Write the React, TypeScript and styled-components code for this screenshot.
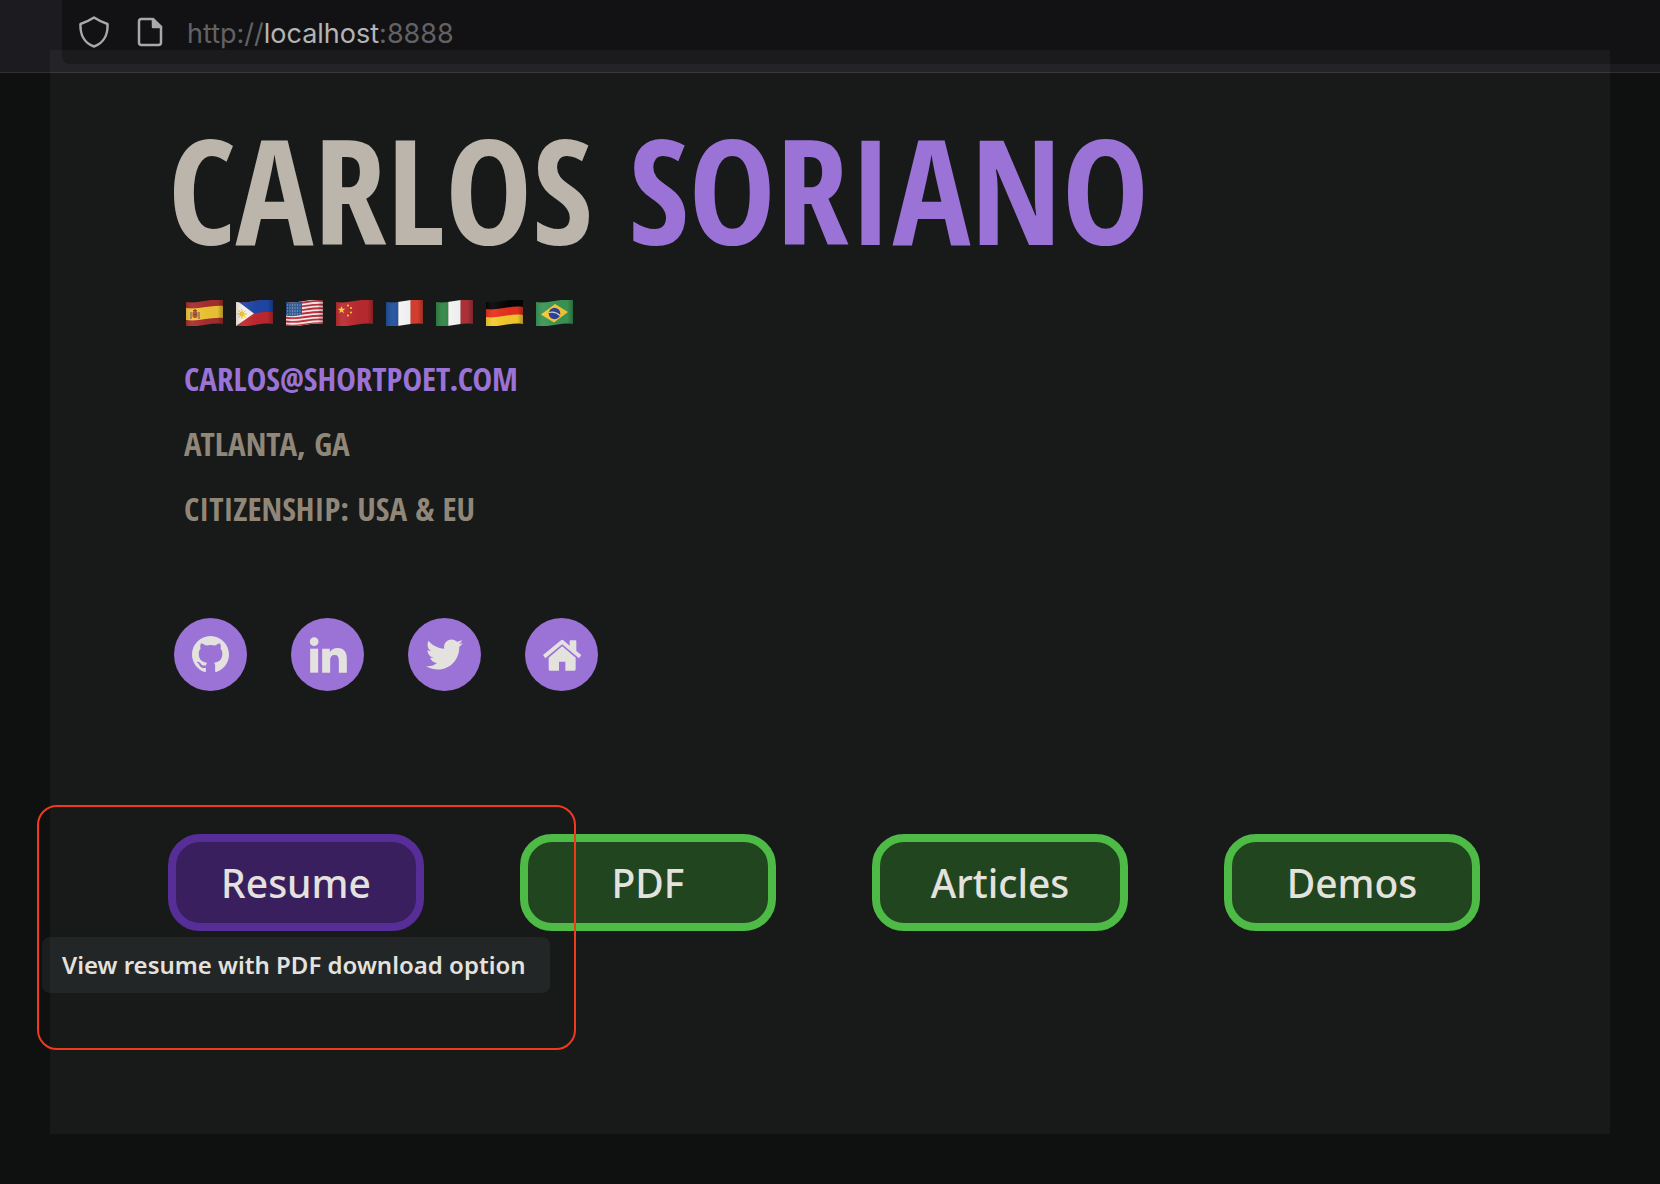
import React, { useId } from "react";
import styled, { createGlobalStyle } from "styled-components";
import { FaTwitter } from "react-icons/fa";

const color = {
  page: "#0e1110",
  toolbar: "#1c1b20",
  field: "#121214",
  veil: "rgba(255, 255, 255, 0.04)",
  sand: "#bbb5ac",
  stone: "#918779",
  violet: "#9b72d6",
  light: "#e4e2de",
  highlight: "#f03a1c",
};

const condensed = `"Noto Sans ExtraCondensed", "Open Sans Condensed", "Roboto Condensed", "Liberation Sans Narrow", sans-serif`;

const GlobalStyle = createGlobalStyle`
  * { box-sizing: border-box; }
  body {
    margin: 0;
    background: ${color.page};
    color: ${color.light};
    font-family: "Noto Sans", "Open Sans", sans-serif;
  }
`;

const Toolbar = styled.header`
  height: 73px;
  padding: 0 0 8px 62px;
  background: ${color.toolbar};
  border-bottom: 1px solid #302f33;
`;

const AddressBar = styled.div`
  display: flex;
  align-items: center;
  gap: 22px;
  height: 64px;
  padding-left: 17px;
  background: ${color.field};
  border-bottom-left-radius: 8px;
  color: #a9a9ab;
`;

const ToolIcon = styled.svg`
  flex: none;
  width: 32px;
  height: 32px;
`;

const Address = styled.div`
  padding-top: 3px;
  color: #626264;
  font: 400 27px/36px Inter, sans-serif;
`;

const Host = styled.span`
  color: #b4b4b6;
`;

const Panel = styled.main`
  position: relative;
  margin: -23px 50px 50px;
  padding: 59px 130px 203px 118px;
  background: ${color.veil};
`;

const Name = styled.h1`
  margin: 0 0 31px 0;
  color: ${color.sand};
  font: 700 146px/160px ${condensed};
  white-space: nowrap;
`;

const Surname = styled.span`
  color: ${color.violet};
`;

const Flags = styled.div`
  display: flex;
  gap: 13px;
  margin: 0 0 20px 18px;
`;

const FlagDrawing = styled.svg`
  display: block;
  width: 37px;
  height: 26px;
`;

const Contact = styled.div`
  display: flex;
  flex-direction: column;
  align-items: flex-start;
  margin: 0 0 77px 16px;
  color: ${color.stone};
  font: 500 33px/65px ${condensed};
`;

const Email = styled.a`
  color: ${color.violet};
  text-decoration: none;
`;

const Socials = styled.nav`
  display: flex;
  gap: 44px;
  margin: 0 0 143px 6px;
`;

const SocialLink = styled.a`
  display: grid;
  place-items: center;
  width: 73px;
  height: 73px;
  border-radius: 50%;
  background: ${color.violet};
  color: ${color.light};
`;

const Actions = styled.nav`
  position: relative;
  display: grid;
  grid-template-columns: repeat(4, 1fr);
  gap: 96px;
`;

const ActionButton = styled.button<{ $active?: boolean }>`
  height: 97px;
  padding: 0;
  border: 8px solid ${(p) => (p.$active ? "#572d98" : "#4fbb47")};
  border-radius: 32px;
  background: ${(p) => (p.$active ? "#391f5e" : "#20451f")};
  color: ${color.light};
  font: 500 39px/56px "Noto Sans", "Open Sans", sans-serif;
`;

const Tooltip = styled.div`
  position: absolute;
  top: 103px;
  left: -126px;
  padding: 10px 24px 10px 20px;
  border-radius: 8px;
  background: rgba(240, 235, 255, 0.06);
  font-weight: 600;
  font-size: 24px;
  line-height: 36px;
  white-space: nowrap;
`;

const Highlight = styled.div`
  position: absolute;
  top: -29px;
  left: -131px;
  width: 539px;
  height: 245px;
  border: 2px solid ${color.highlight};
  border-radius: 20px;
  pointer-events: none;
`;

/* A horizontal stripe that follows the wave of the cloth. */
const stripe = (top: number, bottom: number) =>
  `M0 ${top + 2}C12 ${top + 4} 24 ${top - 2} 37 ${top}V${bottom - 2}C24 ${bottom - 4} 12 ${bottom + 2} 0 ${bottom}Z`;

const Band = ({ from, to, fill }: { from: number; to: number; fill: string }) => (
  <path d={stripe(from, to)} fill={fill} />
);

function Flag({ label, children }: { label: string; children: React.ReactNode }) {
  const id = "flag" + useId().replace(/\W/g, "");
  return (
    <FlagDrawing viewBox="0 0 37 26" role="img" aria-label={label}>
      <defs>
        <clipPath id={`${id}c`}>
          <path d={stripe(0, 26)} />
        </clipPath>
        <linearGradient id={`${id}g`}>
          <stop offset="0" stopColor="#000" stopOpacity="0.12" />
          <stop offset="0.2" stopColor="#fff" stopOpacity="0.06" />
          <stop offset="0.6" stopColor="#000" stopOpacity="0.04" />
          <stop offset="0.85" stopColor="#000" stopOpacity="0.04" />
          <stop offset="1" stopColor="#000" stopOpacity="0.3" />
        </linearGradient>
      </defs>
      <g clipPath={`url(#${id}c)`}>
        {children}
        <rect width="37" height="26" fill={`url(#${id}g)`} />
      </g>
    </FlagDrawing>
  );
}

const Tricolour = ({ fills }: { fills: string[] }) => (
  <>
    {fills.map((fill, i) => (
      <rect key={fill} x={i * 12.3} width="12.5" height="26" fill={fill} />
    ))}
  </>
);

const STAR = "M0-4L1-1.2 3.8-1.2 1.5.5 2.4 3.3 0 1.6-2.4 3.3-1.5.5-3.8-1.2-1-1.2Z";

const flags = [
  {
    label: "Spain",
    art: (
      <>
        <rect width="37" height="26" fill="#a82e2e" />
        <path d="M0 8C12 10 24 5 37 6V18C24 17 12 22 0 20Z" fill="#f0c636" />
        <rect x="6.5" y="11" width="5" height="7" rx="2" fill="#b8433a" />
        <path d="M5 12v7M13 12v7" stroke="#8a6a55" strokeWidth="1.4" />
        <path d="M7 10.5h4M9 9v2M7 14.5h4" stroke="#7a4a20" strokeWidth="1.2" />
      </>
    ),
  },
  {
    label: "Philippines",
    art: (
      <>
        <rect width="37" height="26" fill="#c1282f" />
        <path d="M0 0H37V12C24 11 12 16 0 14Z" fill="#1f47a8" />
        <path d="M0 0L18 13.5 0 26Z" fill="#f4f1e8" />
        <circle cx="6" cy="14" r="2.6" fill="#efbd2e" />
        <path d="M6 9v10M1 14h10M2.5 10.5l7 7M9.5 10.5l-7 7" stroke="#efbd2e" strokeWidth="1" />
      </>
    ),
  },
  {
    label: "United States",
    art: (
      <>
        <rect width="37" height="26" fill="#f3f1f1" />
        {[0, 1, 2, 3, 4, 5, 6].map((i) => (
          <path
            key={i}
            d={`M0 ${i * 3.7 + 3}c12 2 24-3 37-2`}
            fill="none"
            stroke="#c4303a"
            strokeWidth="1.9"
          />
        ))}
        <path d="M0 0H16V14.5C10 16.5 5 16.5 0 15.5Z" fill="#2d5590" />
        {[5, 8, 11, 14].map((y) => (
          <path key={y} d={`M1 ${y}h15`} stroke="#a9bcd8" strokeWidth="1" strokeDasharray="1 1.5" />
        ))}
      </>
    ),
  },
  {
    label: "China",
    art: (
      <>
        <rect width="37" height="26" fill="#bc2b30" />
        <path d={STAR} fill="#f6d532" transform="translate(5.5 10)" />
        {[
          [12, 5.5],
          [15, 8],
          [15, 12.5],
          [12, 15.5],
        ].map(([x, y]) => (
          <circle key={y} cx={x} cy={y} r="1.1" fill="#f6c832" />
        ))}
      </>
    ),
  },
  { label: "France", art: <Tricolour fills={["#1f4f9c", "#f9f9f9", "#dc402f"]} /> },
  { label: "Italy", art: <Tricolour fills={["#2f8544", "#f8f8f8", "#b2323a"]} /> },
  {
    label: "Germany",
    art: (
      <>
        <Band from={-2} to={11} fill="#050505" />
        <Band from={7} to={19} fill="#e8301f" />
        <Band from={15} to={28} fill="#f6cb2e" />
      </>
    ),
  },
  {
    label: "Brazil",
    art: (
      <>
        <rect width="37" height="26" fill="#3a9655" />
        <path d="M5 14.5L19 4 32 12 18 22.5Z" fill="#f7c934" />
        <circle cx="18.5" cy="13.5" r="5.8" fill="#313f94" />
        <path d="M13 12.5c4-1 8 0 11 3" fill="none" stroke="#c8d6ec" strokeWidth="1.2" />
      </>
    ),
  },
];

const GitHubIcon = () => (
  <svg width="37" height="37" viewBox="0 0 16 16" fill="currentColor" aria-hidden="true">
    <path d="M8 0C3.58 0 0 3.58 0 8c0 3.54 2.29 6.53 5.47 7.59.4.07.55-.17.55-.38 0-.19-.01-.82-.01-1.49-2.01.37-2.53-.49-2.69-.94-.09-.23-.48-.94-.82-1.13-.28-.15-.68-.52-.01-.53.63-.01 1.08.58 1.23.82.72 1.21 1.87.87 2.33.66.07-.52.28-.87.51-1.07-1.78-.2-3.64-.89-3.64-3.95 0-.87.31-1.59.82-2.15-.08-.2-.36-1.02.08-2.12 0 0 .67-.21 2.2.82.64-.18 1.32-.27 2-.27s1.36.09 2 .27c1.53-1.04 2.2-.82 2.2-.82.44 1.1.16 1.92.08 2.12.51.56.82 1.27.82 2.15 0 3.07-1.87 3.75-3.65 3.95.29.25.54.73.54 1.48 0 1.07-.01 1.93-.01 2.2 0 .21.15.46.55.38A8.01 8.01 0 0 0 16 8c0-4.42-3.58-8-8-8z" />
  </svg>
);

const LinkedInIcon = () => (
  <svg width="40" height="40" viewBox="0 0 120 120" fill="currentColor" aria-hidden="true">
    <circle cx="18.5" cy="20" r="13" />
    <path d="M6.5 41H30.5V113H6.5Z" />
    <path d="M42.5 41H65.5V51C70 44 78 39 89 39C108 39 116.5 51 116.5 72V113H92.5V77C92.5 66 89 60 80.5 60C70.5 60 66.5 66 66.5 77V113H42.5Z" />
  </svg>
);

const HomeIcon = () => (
  <svg width="40" height="40" viewBox="0 0 120 120" fill="currentColor" aria-hidden="true">
    <path d="M3 60L57 16Q60.5 13 64 16L83 32V18Q83 16 85 16H101Q103 16 103 18V48L118 60 111 70 60.5 28 10 70Z" />
    <path d="M60.5 34L101 68V103Q101 107 97 107H70V80H51V107H24Q20 107 20 103V68Z" />
  </svg>
);

const socials = [
  { label: "GitHub", icon: <GitHubIcon /> },
  { label: "LinkedIn", icon: <LinkedInIcon /> },
  { label: "Twitter", icon: <FaTwitter size={37} /> },
  { label: "Home page", icon: <HomeIcon /> },
];

export default function App() {
  return (
    <>
      <GlobalStyle />
      <Toolbar>
        <AddressBar>
          <ToolIcon viewBox="0 0 32 32" fill="none" stroke="currentColor" strokeWidth="2.5" strokeLinejoin="round" aria-hidden="true">
            <path d="M15 1.5Q22 6 28.5 8C29 18 25 27 15 30.5 5 27 1 18 1.5 8Q8 6 15 1.5Z" />
          </ToolIcon>
          <ToolIcon viewBox="0 0 32 32" fill="none" stroke="currentColor" strokeWidth="2.5" strokeLinejoin="round" aria-hidden="true">
            <path d="M19 3H8.5Q6 3 6 5.5V26.5Q6 29 8.5 29H25.5Q28 29 28 26.5V11Z" />
            <path d="M20 3V11H28Z" fill="currentColor" />
          </ToolIcon>
          <Address>
            http://<Host>localhost</Host>:8888
          </Address>
        </AddressBar>
      </Toolbar>
      <Panel>
        <Name>
          CARLOS <Surname>SORIANO</Surname>
        </Name>
        <Flags>
          {flags.map((flag) => (
            <Flag key={flag.label} label={flag.label}>
              {flag.art}
            </Flag>
          ))}
        </Flags>
        <Contact>
          <Email href="mailto:carlos@shortpoet.com">CARLOS@SHORTPOET.COM</Email>
          <span>ATLANTA, GA</span>
          <span>CITIZENSHIP: USA &amp; EU</span>
        </Contact>
        <Socials aria-label="Profiles">
          {socials.map((item) => (
            <SocialLink key={item.label} href="#" aria-label={item.label}>
              {item.icon}
            </SocialLink>
          ))}
        </Socials>
        <Actions aria-label="Sections">
          <ActionButton $active aria-describedby="resume-tip">
            Resume
          </ActionButton>
          <ActionButton>PDF</ActionButton>
          <ActionButton>Articles</ActionButton>
          <ActionButton>Demos</ActionButton>
          <Tooltip id="resume-tip" role="tooltip">
            View resume with PDF download option
          </Tooltip>
          <Highlight />
        </Actions>
      </Panel>
    </>
  );
}
